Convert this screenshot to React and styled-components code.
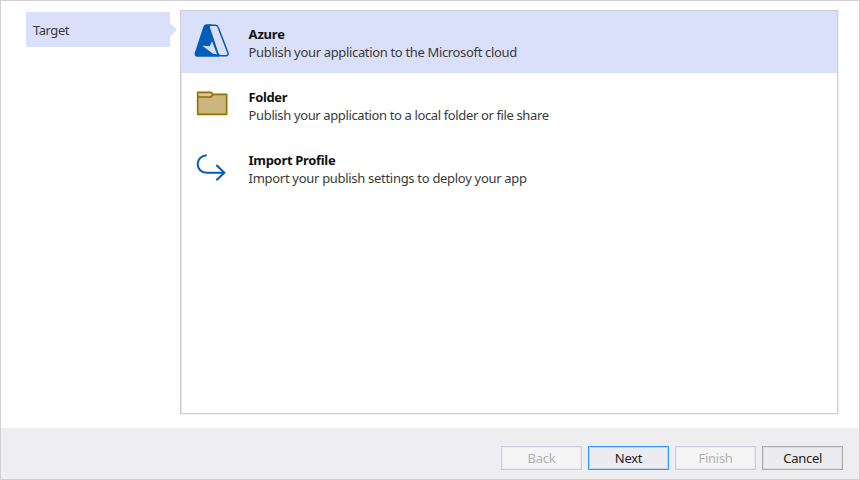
import React from "react";
import styled, { createGlobalStyle } from "styled-components";

const GlobalStyle = createGlobalStyle`
  * { box-sizing: border-box; }
  body { margin: 0; background: #fff; }
`;

const Dialog = styled.div`
  width: 860px;
  height: 480px;
  display: flex;
  flex-direction: column;
  border: 1px solid #d0d0d0;
  background: #fff;
  color: #3a3a3a;
  font: 13px/18px "Noto Sans", "Open Sans", sans-serif;
`;

const Body = styled.main`
  flex: 1;
  display: flex;
  align-items: flex-start;
  padding: 9px 21px 0 25px;
`;

const Steps = styled.nav`
  width: 154px;
  padding-top: 2px;
`;

const Step = styled.div`
  position: relative;
  width: 144px;
  height: 35px;
  padding-left: 7px;
  line-height: 37px;
  font-size: 13px;
  letter-spacing: -0.45px;
  background: #dae0f9;

  &::after {
    content: "";
    position: absolute;
    left: 100%;
    top: 11px;
    border: 7px solid transparent;
    border-left-color: #dae0f9;
    border-right-width: 0;
  }
`;

const OptionList = styled.section`
  width: 658px;
  height: 404px;
  border: 1px solid #cccedb;
  box-shadow: inset 1px 0 0 #e2e3ec, 0 1px 0 #f1f1f7, 1px 0 0 #f1f1f7;
`;

const Option = styled.div`
  display: flex;
  height: ${(p) => (p.$selected ? 62 : 63)}px;
  padding: 12px 0 0 13px;
  margin-bottom: ${(p) => (p.$selected ? 1 : 0)}px;
  background: ${(p) => (p.$selected ? "#dae0f9" : "transparent")};
`;

const OptionIcon = styled.svg`
  width: 36px;
  height: 34px;
  margin: ${(p) => p.$drop || 0}px 18.6px 0 0;
  flex: none;
`;

const OptionText = styled.div`
  padding-top: 2px;
  white-space: nowrap;
`;

const OptionTitle = styled.div`
  color: #111;
  font-weight: 700;
  font-size: 13px;
  letter-spacing: ${(p) => p.$spacing}px;
`;

const Description = styled.div`
  font-size: 13px;
  letter-spacing: ${(p) => p.$spacing}px;
`;

const Footer = styled.footer`
  height: 51px;
  display: flex;
  justify-content: flex-end;
  gap: 6.4px;
  padding: 18px 16px 0 0;
  background: #eeeef0;
`;

const Button = styled.button`
  width: 80.7px;
  height: 24px;
  padding: 0;
  font: 13px/22px "Noto Sans", "Open Sans", sans-serif;
  letter-spacing: -0.3px;
  color: ${(p) => (p.disabled ? "#b1b1b4" : "#222")};
  background: ${(p) => (p.disabled ? "#f5f5f5" : "#ececf0")};
  border: 1px solid
    ${(p) => (p.disabled ? "#cccedb" : p.$primary ? "#3399ff" : "#acacac")};
  box-shadow: inset 0 0 0 1px
    ${(p) => (p.disabled ? "#e9eaef" : p.$primary ? "#b5d6f7" : "#dcdcdf")};
`;

const AzureIcon = () => (
  <OptionIcon viewBox="27 24 108 102">
    <path
      d="M64 28H80L98 90L104 125H37Q26 125 30 112L55 35Q58 28 64 28Z"
      fill="#005dba"
    />
    <path
      d="M76 31H92Q98 31 100 38L129 114Q131 122 123 122H107Q101 122 98 114L73 39Q71 31 76 31Z"
      fill="#dae0f9"
      stroke="#005dba"
      strokeWidth="4.5"
    />
    <path d="M81 79L96 118L84 116L52 92L74 94Z" fill="#dae0f9" />
  </OptionIcon>
);

const FolderIcon = () => (
  <OptionIcon viewBox="27 24 108 102" $drop={2}>
    <path d="M38 37H78L83 43H125V103H38Z" fill="#cbb680" stroke="#996f00" strokeWidth="5" strokeLinejoin="round" />
    <path d="M38 51H78L84 43" fill="none" stroke="#996f00" strokeWidth="5" />
    <path d="M41 44H78" stroke="#e0cfaa" strokeWidth="5" />
  </OptionIcon>
);

const ImportIcon = () => (
  <OptionIcon viewBox="27 24 108 102" $drop={3.6}>
    <path
      d="M65 31C49 32 38 43 38 57C38 72 49 83 65 83H118M94 60L118 83L94 106"
      fill="none"
      stroke="#005dba"
      strokeWidth="6"
    />
  </OptionIcon>
);

const OPTIONS = [
  {
    title: "Azure",
    text: "Publish your application to the Microsoft cloud",
    Icon: AzureIcon,
    selected: true,
    titleSpacing: -0.2,
    textSpacing: -0.34,
  },
  {
    title: "Folder",
    text: "Publish your application to a local folder or file share",
    Icon: FolderIcon,
    titleSpacing: -0.4,
    textSpacing: -0.37,
  },
  {
    title: "Import Profile",
    text: "Import your publish settings to deploy your app",
    Icon: ImportIcon,
    titleSpacing: -0.32,
    textSpacing: -0.3,
  },
];

export default function App() {
  return (
    <>
      <GlobalStyle />
      <Dialog>
        <Body>
          <Steps>
            <Step>Target</Step>
          </Steps>
          <OptionList>
            {OPTIONS.map(({ title, text, Icon, selected, titleSpacing, textSpacing }) => (
              <Option key={title} $selected={selected}>
                <Icon />
                <OptionText>
                  <OptionTitle $spacing={titleSpacing}>{title}</OptionTitle>
                  <Description $spacing={textSpacing}>{text}</Description>
                </OptionText>
              </Option>
            ))}
          </OptionList>
        </Body>
        <Footer>
          <Button disabled>Back</Button>
          <Button $primary>Next</Button>
          <Button disabled>Finish</Button>
          <Button>Cancel</Button>
        </Footer>
      </Dialog>
    </>
  );
}
